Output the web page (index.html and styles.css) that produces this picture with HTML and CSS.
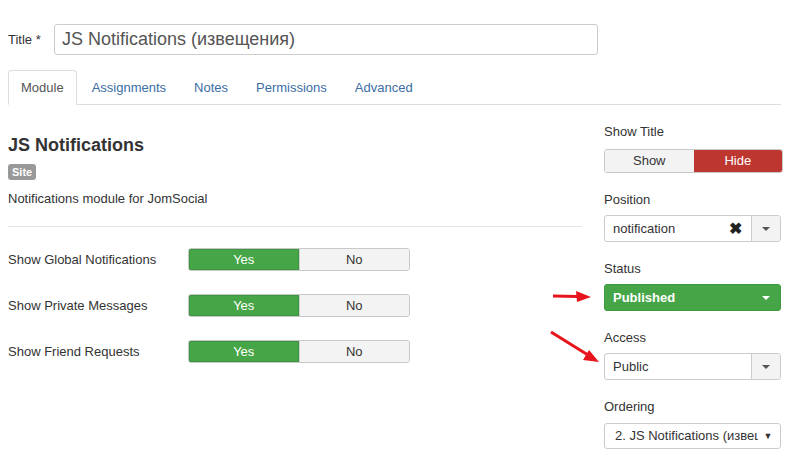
FILE: index.html
```html
<!DOCTYPE html>
<html>
<head>
<meta charset="utf-8">
<link rel="stylesheet" href="styles.css">
</head>
<body>
<div class="page">
  <div class="title-row">
    <label class="title-label">Title *</label>
    <div class="title-input">JS Notifications (извещения)</div>
  </div>
  <ul class="tabs">
    <li class="tab active">Module</li>
    <li class="tab">Assignments</li>
    <li class="tab">Notes</li>
    <li class="tab">Permissions</li>
    <li class="tab">Advanced</li>
  </ul>
  <div class="content">
    <div class="main">
      <h3 class="mod-title">JS Notifications</h3>
      <span class="badge">Site</span>
      <p class="desc">Notifications module for JomSocial</p>
      <hr class="sep">
      <div class="opt-row">
        <span class="opt-label">Show Global Notifications</span>
        <div class="toggle"><span class="yes on">Yes</span><span class="no">No</span></div>
      </div>
      <div class="opt-row">
        <span class="opt-label">Show Private Messages</span>
        <div class="toggle"><span class="yes on">Yes</span><span class="no">No</span></div>
      </div>
      <div class="opt-row">
        <span class="opt-label">Show Friend Requests</span>
        <div class="toggle"><span class="yes on">Yes</span><span class="no">No</span></div>
      </div>
    </div>
    <div class="side">
      <div class="field">
        <div class="f-label tight">Show Title</div>
        <div class="toggle side-toggle"><span class="show">Show</span><span class="hide">Hide</span></div>
      </div>
      <div class="field">
        <div class="f-label">Position</div>
        <div class="chosen">
          <span class="chosen-text">notification</span>
          <span class="chosen-x">✖</span>
          <span class="chosen-btn"><span class="caret"></span></span>
        </div>
      </div>
      <div class="field">
        <div class="f-label">Status</div>
        <div class="status">
          <span class="status-text">Published</span>
          <span class="caret white"></span>
        </div>
      </div>
      <div class="field">
        <div class="f-label">Access</div>
        <div class="chosen">
          <span class="chosen-text">Public</span>
          <span class="chosen-btn"><span class="caret"></span></span>
        </div>
      </div>
      <div class="field">
        <div class="f-label ord">Ordering</div>
        <div class="native">
          <span class="native-text">2. JS Notifications (извещения)</span>
          <span class="native-arrow">▼</span>
        </div>
      </div>
    </div>
  </div>
  <svg class="arrows" width="790" height="457" viewBox="0 0 790 457">
    <line x1="553" y1="296" x2="578" y2="296.5" stroke="#e8141c" stroke-width="3"/>
    <polygon points="591,297 576,291 577,302" fill="#e8141c"/>
    <line x1="551" y1="332" x2="588" y2="355" stroke="#e8141c" stroke-width="3"/>
    <polygon points="599,362 583,360 589,350" fill="#e8141c"/>
  </svg>
</div>
</body>
</html>
```
FILE: styles.css
```css
html, body {
  margin: 0;
  padding: 0;
  background: #fff;
}
body {
  font-family: "Liberation Sans", Arial, sans-serif;
  font-size: 13px;
  line-height: 18px;
  color: #333;
}
.page {
  position: relative;
  width: 790px;
  height: 457px;
  box-sizing: border-box;
  padding: 24px 9px 0 8px;
  overflow: hidden;
}
.title-row {
  display: flex;
  align-items: center;
  height: 31px;
}
.title-label {
  width: 46px;
  color: #333;
}
.title-input {
  width: 544px;
  height: 31px;
  box-sizing: border-box;
  border: 1px solid #ccc;
  border-radius: 3px;
  padding: 0 7px;
  font-size: 18px;
  line-height: 29px;
  color: #555;
}
.tabs {
  list-style: none;
  margin: 15px 0 0 0;
  padding: 0;
  display: flex;
  border-bottom: 1px solid #ddd;
  height: 35px;
  box-sizing: border-box;
}
.tab {
  padding: 8px 12px;
  margin-right: 2px;
  margin-bottom: -1px;
  border: 1px solid transparent;
  border-radius: 4px 4px 0 0;
  color: #3b6ea5;
  line-height: 17px;
}
.tab.active {
  color: #555;
  border-color: #ddd;
  border-bottom-color: #fff;
  background: #fff;
}
.content {
  display: flex;
  gap: 22px;
}
.main {
  flex: 0 0 574px;
  padding-top: 28px;
}
.mod-title {
  margin: 0;
  font-size: 18px;
  line-height: 24px;
  font-weight: bold;
  color: #333;
}
.badge {
  display: inline-block;
  margin-top: 7px;
  background: #999;
  color: #fff;
  font-size: 11px;
  font-weight: bold;
  line-height: 16px;
  height: 16px;
  padding: 0 4px;
  border-radius: 3px;
  vertical-align: top;
}
.desc {
  margin: 10px 0 0 0;
}
.sep {
  margin: 18px 0 0 0;
  border: 0;
  border-top: 1px solid #e5e5e5;
  height: 0;
}
.opt-row {
  display: flex;
  align-items: center;
  height: 23px;
  margin-top: 23px;
}
.opt-row:first-of-type {
  margin-top: 21px;
}
.opt-label {
  width: 180px;
}
.toggle {
  display: flex;
  width: 222px;
  height: 23px;
  box-sizing: border-box;
  border: 1px solid #c8c8c8;
  border-radius: 3px;
  overflow: hidden;
}
.toggle span {
  flex: 1;
  text-align: center;
  line-height: 21px;
}
.yes.on {
  background: #46a546;
  color: #fff;
  box-shadow: inset 0 0 0 1px #3f943f;
}
.no {
  background: #f3f3f3;
  color: #333;
  border-left: 1px solid #d0d0d0;
}
.side {
  flex: 0 0 179px;
  padding-top: 18px;
}
.field {
  margin-bottom: 18px;
}
.f-label {
  margin-bottom: 6px;
  color: #333;
}
.f-label.tight {
  margin-bottom: 8px;
}
.f-label.ord {
  margin-bottom: 7px;
}
.side-toggle {
  width: 179px;
  height: 24px;
}
.show {
  background: #f3f3f3;
  color: #333;
}
.hide {
  background: #bd362f;
  color: #fff;
}
.side-toggle span {
  line-height: 22px;
}
.chosen {
  display: flex;
  align-items: center;
  width: 177px;
  height: 27px;
  box-sizing: border-box;
  border: 1px solid #ccc;
  border-radius: 3px;
  background: #fff;
  overflow: hidden;
}
.chosen-text {
  flex: 1;
  padding-left: 8px;
  color: #333;
}
.chosen-x {
  width: 18px;
  margin-right: 7px;
  font-size: 16px;
  font-weight: bold;
  color: #222;
  text-align: center;
}
.chosen-btn {
  display: flex;
  align-items: center;
  justify-content: center;
  width: 28px;
  height: 100%;
  border-left: 1px solid #ccc;
  background: #f3f3f3;
}
.caret {
  width: 0;
  height: 0;
  border-left: 4px solid transparent;
  border-right: 4px solid transparent;
  border-top: 4px solid #555;
}
.caret.white {
  border-top-color: #fff;
  margin-right: 10px;
}
.status {
  display: flex;
  align-items: center;
  width: 177px;
  height: 27px;
  box-sizing: border-box;
  border: 1px solid #3f9a3f;
  border-radius: 3px;
  background: #46a546;
}
.status-text {
  flex: 1;
  padding-left: 8px;
  color: #fff;
  font-weight: bold;
}
.native {
  display: flex;
  align-items: center;
  width: 177px;
  height: 26px;
  box-sizing: border-box;
  border: 1px solid #ccc;
  border-radius: 3px;
  background: #fff;
  overflow: hidden;
}
.native-text {
  flex: 1;
  min-width: 0;
  padding-left: 10px;
  white-space: nowrap;
  overflow: hidden;
  text-overflow: clip;
  color: #333;
}
.native-arrow {
  flex: 0 0 20px;
  text-align: center;
  font-size: 9px;
  color: #333;
  padding-right: 2px;
}
.arrows {
  position: absolute;
  left: 0;
  top: 0;
  pointer-events: none;
}
```
